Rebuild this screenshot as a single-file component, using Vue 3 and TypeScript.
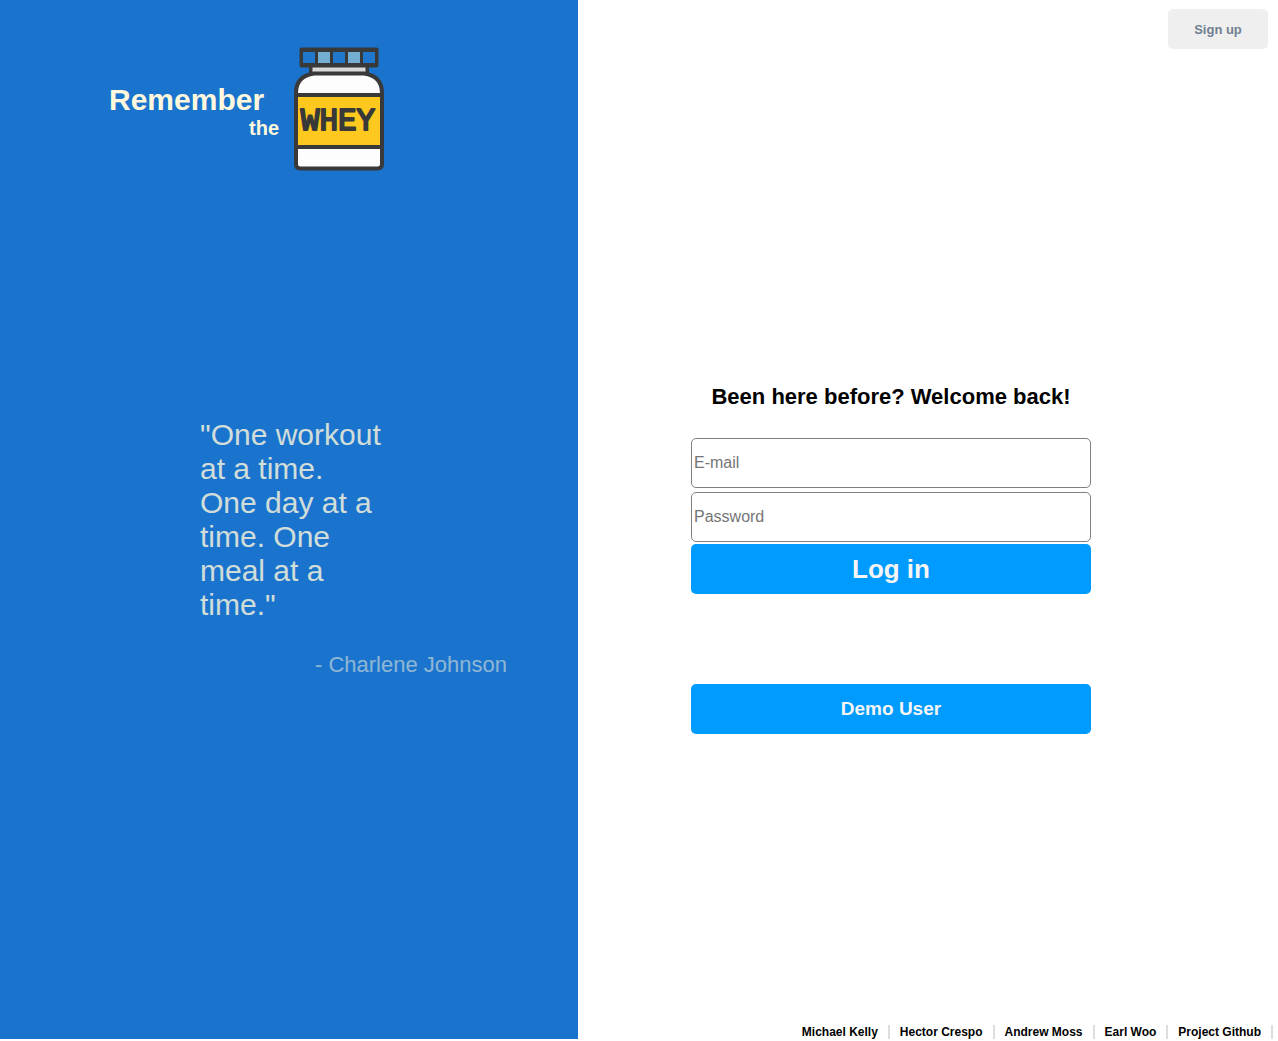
<script setup lang="ts">
import { ref } from 'vue'

interface FooterLink {
  label: string
  href: string
}

const email = ref('')
const password = ref('')

const links: FooterLink[] = [
  { label: 'Michael Kelly', href: '#michael' },
  { label: 'Hector Crespo', href: '#hector' },
  { label: 'Andrew Moss', href: '#andrew' },
  { label: 'Earl Woo', href: '#earl' },
  { label: 'Project Github', href: '#github' },
]

// Squares on the lid of the jar
const lid = [
  { x: 9, fill: '#1f78cc' },
  { x: 24, fill: '#74afd3' },
  { x: 39, fill: '#1f78cc' },
  { x: 54, fill: '#74afd3' },
  { x: 69, fill: '#1f78cc' },
]
</script>

<template>
  <div class="page">
    <aside class="brand">
      <header class="logo">
        <h1 class="name">
          <span class="remember">Remember</span>
          <span class="the">the</span>
        </h1>
        <svg class="jar" width="90" height="124" viewBox="0 0 90 124" role="img" aria-label="Whey jar">
          <rect x="5.5" y="0.5" width="79" height="20" rx="2" fill="#393939" />
          <rect v-for="s in lid" :key="s.x" :x="s.x" y="5" width="12" height="11" :fill="s.fill" />
          <rect x="15" y="19" width="60" height="9" fill="#393939" />
          <rect x="18.5" y="20.5" width="53" height="4.5" fill="#d9d9d9" />
          <path
            d="M20 26.500H70Q88 29 88 46V117Q88 121.500 83.500 121.500H6.500Q2 121.500 2 117V46Q2 29 20 26.500Z"
            fill="#fdfdfd"
            stroke="#393939"
            stroke-width="4"
          />
          <rect x="4" y="48" width="82" height="52" fill="#fec81e" />
          <path d="M2 48H88M2 100H88" stroke="#393939" stroke-width="4" />
          <text class="label" x="44" y="83" text-anchor="middle">WHEY</text>
        </svg>
      </header>
      <figure class="quote">
        <blockquote>
          "One workout at a time. One day at a time. One meal at a time."
        </blockquote>
        <figcaption>- Charlene Johnson</figcaption>
      </figure>
    </aside>

    <div class="content">
      <nav class="top">
        <button type="button" class="signup">Sign up</button>
      </nav>
      <main class="main">
        <form class="login" @submit.prevent>
          <h2>Been here before? Welcome back!</h2>
          <input v-model="email" type="email" placeholder="E-mail" aria-label="E-mail" />
          <input v-model="password" type="password" placeholder="Password" aria-label="Password" />
          <button type="submit" class="primary">Log in</button>
          <button type="button" class="primary demo">Demo User</button>
        </form>
      </main>
      <footer class="links">
        <a v-for="link in links" :key="link.label" :href="link.href">{{ link.label }}</a>
      </footer>
    </div>
  </div>
</template>

<style scoped>
.page {
  box-sizing: border-box;
  display: grid;
  grid-template-columns: 289fr 350fr;
  min-height: 100vh;
  padding-bottom: 2px;
  background: #fff;
  font-family: 'Liberation Sans', Arial, sans-serif;
}

.brand {
  background: #1a74ce;
  color: cornsilk;
}

.logo {
  display: flex;
  align-items: flex-start;
  gap: 15px;
  padding: 47px 0 0 109px;
}

.name {
  display: flex;
  flex-direction: column;
  width: 170px;
  margin: 0;
  padding-top: 36px;
}

.remember {
  font-size: 30px;
  line-height: 34px;
}

.the {
  align-self: flex-end;
  font-size: 20px;
  line-height: 22px;
}

.jar {
  flex: none;
}

.label {
  font-family: 'Liberation Mono', monospace;
  font-size: 31px;
  fill: #393939;
  stroke: #393939;
  stroke-width: 2px;
  stroke-linejoin: round;
}

.quote {
  width: 307px;
  margin: 247px 0 0 200px;
}

.quote blockquote {
  width: 184px;
  margin: 0 0 30px;
  font-size: 30px;
  line-height: 34px;
  opacity: 0.8;
}

.quote figcaption {
  font-size: 22px;
  line-height: 26px;
  text-align: right;
  opacity: 0.5;
}

.content {
  display: flex;
  flex-direction: column;
}

.top {
  display: flex;
  justify-content: flex-end;
  padding: 9px 10px 0 0;
}

button {
  border: 0;
  border-radius: 5px;
  font-family: inherit;
  font-weight: bold;
  cursor: pointer;
}

.signup {
  width: 100px;
  height: 40px;
  background: #efefef;
  color: slategray;
  font-size: 13px;
}

.main {
  display: flex;
  flex: 1;
  justify-content: center;
  padding: 335px 74px 0 0;
}

.login {
  display: flex;
  flex-direction: column;
  width: 400px;
}

.login h2 {
  margin: 0 0 28px;
  font-size: 22px;
  line-height: 26px;
  text-align: center;
}

.login input {
  box-sizing: border-box;
  height: 50px;
  margin-bottom: 4px;
  padding: 1px 2px;
  border: 1px solid gray;
  border-radius: 5px;
  background: #fff;
  font-family: inherit;
  font-size: 16px;
}

.login input[type='password'] {
  margin-bottom: 2px;
}

.login input::placeholder {
  color: #757575;
}

.primary {
  height: 50px;
  background: #009bff;
  color: whitesmoke;
  font-size: 26px;
}

.demo {
  margin-top: 90px;
  font-size: 19px;
}

.links {
  display: flex;
  justify-content: flex-end;
  padding-right: 5px;
}

.links a {
  padding: 0 10px;
  border-right: 2px solid #ddd;
  color: #000;
  font-size: 12px;
  font-weight: bold;
  line-height: 14px;
  text-decoration: none;
}
</style>

<style>
body {
  margin: 0;
}
</style>
